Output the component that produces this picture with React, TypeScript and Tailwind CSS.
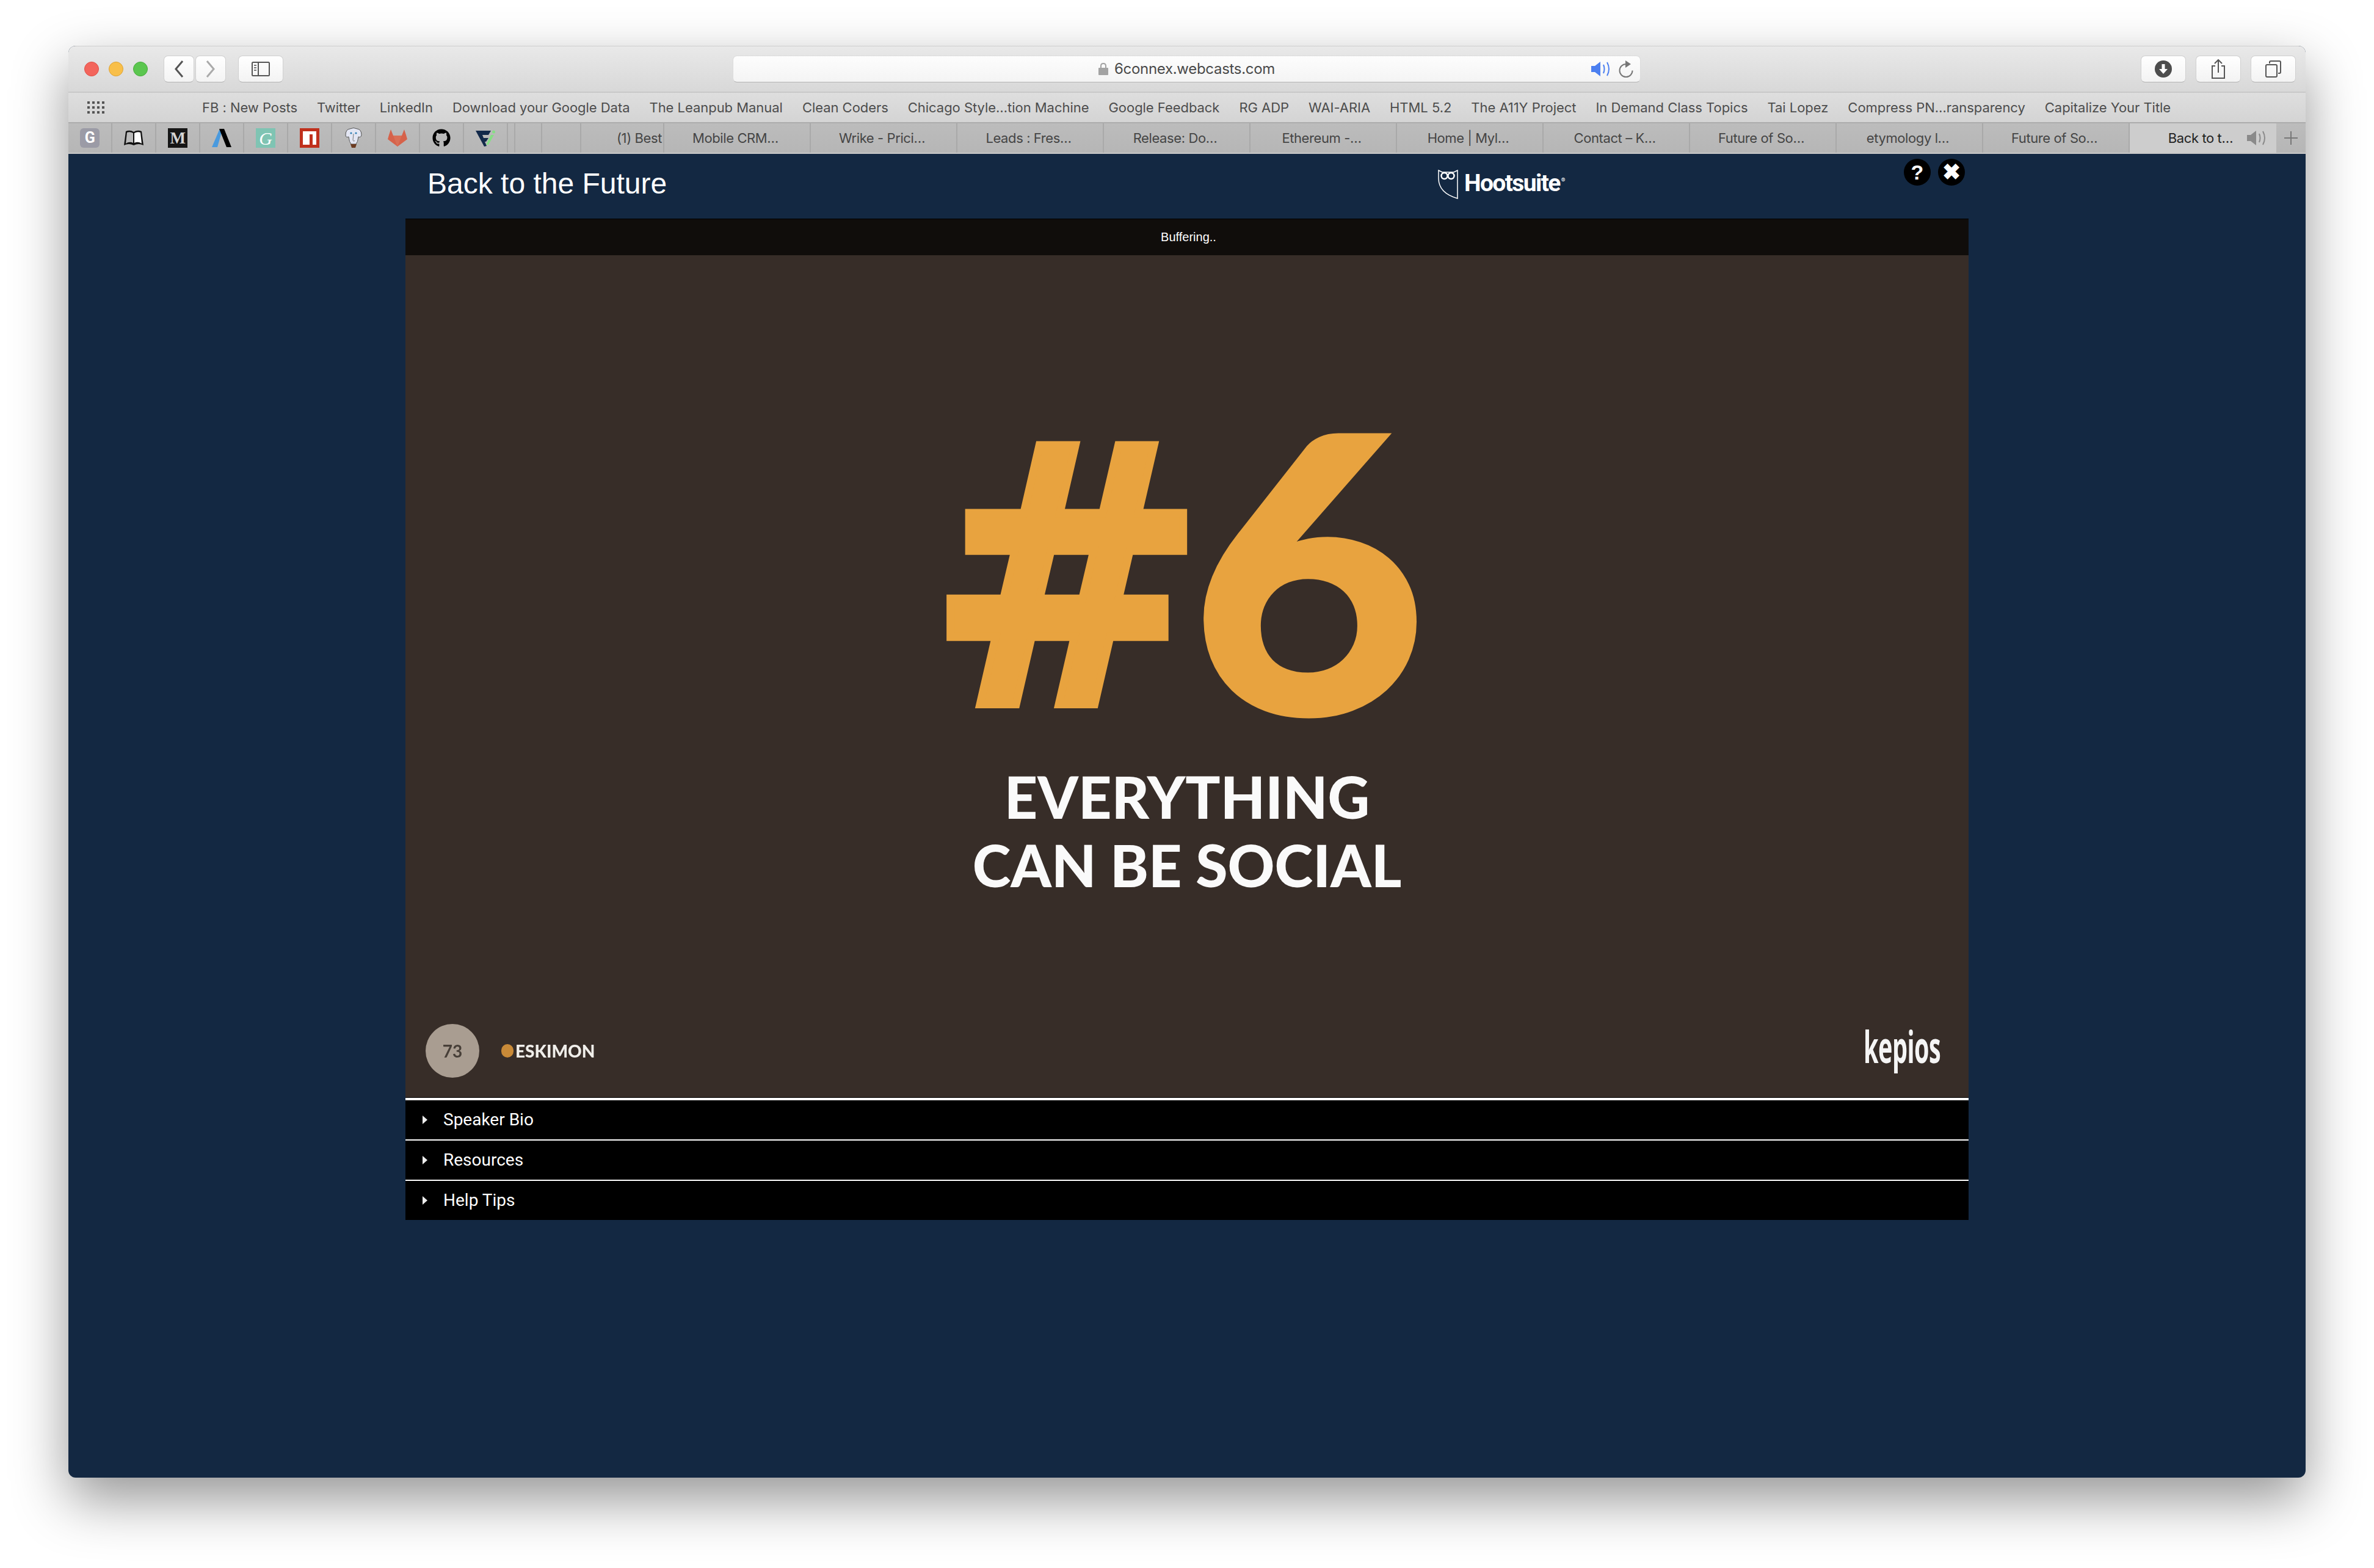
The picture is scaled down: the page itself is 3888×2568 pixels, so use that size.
import React from 'react';
import { FaGithub } from 'react-icons/fa';

const BOOKMARKS = [
  'FB : New Posts', 'Twitter', 'LinkedIn', 'Download your Google Data', 'The Leanpub Manual', 'Clean Coders',
  'Chicago Style…tion Machine', 'Google Feedback', 'RG ADP', 'WAI-ARIA', 'HTML 5.2', 'The A11Y Project',
  'In Demand Class Topics', 'Tai Lopez', 'Compress PN…ransparency', 'Capitalize Your Title',
];

const TABS = [
  'Mobile CRM…', 'Wrike - Prici…', 'Leads : Fres…', 'Release: Do…', 'Ethereum -…', 'Home | Myl…',
  'Contact – K…', 'Future of So…', 'etymology l…', 'Future of So…',
];

const ROWS = ['Speaker Bio', 'Resources', 'Help Tips'];

const ToolButton = ({ w, children }: { w: string; children: React.ReactNode }) => (
  <div className={`${w} h-[44px] flex items-center justify-center rounded-[7px] bg-gradient-to-b from-[#ffffff] to-[#f3f3f3] border border-[#d0d0d0] border-b-[#b4b4b4]`}>
    {children}
  </div>
);

// pinned tab favicons, in order
const Favicons = [
  <div key="g" className="w-[32px] h-[32px] rounded-[6px] bg-[#9b9ba6] flex items-center justify-center text-white text-[25px] font-bold font-['Roboto',sans-serif]">G</div>,
  <svg key="book" width="34" height="28" viewBox="0 0 34 28">
    <path d="M1 26 L4 3 Q11 0 17 4 Q23 0 30 3 L33 26 Q25 22 17 26 Q9 22 1 26Z" fill="#111" />
    <path d="M4 23 L6 5 Q11 3 16 6 L16 22 Q10 19 4 23Z" fill="#bbb" />
    <path d="M18 6 Q23 3 28 5 L30 23 Q24 19 18 22Z" fill="#fff" />
  </svg>,
  <div key="m" className="w-[32px] h-[32px] bg-[#161616] flex items-center justify-center text-[#d4d4d4] text-[27px] font-bold font-['Liberation_Serif',serif]">M</div>,
  <svg key="a" width="32" height="30" viewBox="0 0 32 30">
    <polygon points="0,30 12,2 17,2 9,30" fill="#4a9ade" />
    <polygon points="12,0 20,0 32,30 24,30" fill="#000" />
  </svg>,
  <div key="gr" className="w-[32px] h-[32px] bg-[#7fc4b3] flex items-center justify-center text-white text-[30px] italic font-['Liberation_Serif',serif]">G</div>,
  <div key="npm" className="w-[32px] h-[32px] bg-[#c0301c] p-[5px]">
    <div className="w-full h-full bg-white flex">
      <div className="w-[5px] h-[17px] ml-[11px] mt-[5px] bg-[#c0301c]" />
    </div>
  </div>,
  <svg key="pg" width="30" height="34" viewBox="0 0 30 34">
    <path d="M9 2 Q15 -1 21 2 Q28 3 28 12 Q27 17 23 15 Q22 24 19 27 L11 27 Q8 24 7 15 Q2 17 2 12 Q2 3 9 2Z" fill="#e3e6f3" stroke="#555" strokeWidth="1" />
    <circle cx="11" cy="9" r="1.6" fill="#2f7fb5" />
    <circle cx="19" cy="9" r="1.6" fill="#2f7fb5" />
    <path d="M15 10 L14 20 Q15 24 17 21" stroke="#777" strokeWidth="1" fill="none" />
    <path d="M10 27 H20 L18 33 H12Z" fill="#6b3b22" />
  </svg>,
  <svg key="gl" width="32" height="28" viewBox="0 0 32 28">
    <polygon points="16,28 0,16 2,9 5,0 9,10 23,10 27,0 30,9 32,16" fill="#d6624a" />
    <polygon points="16,28 9,10 23,10" fill="#d96f56" />
  </svg>,
  <FaGithub key="gh" size={30} className="text-black" />,
  <svg key="fi" width="32" height="28" viewBox="0 0 32 28">
    <polygon points="0,2 25,2 21,9 11,9 13,14 21,14 17,20 15,20 18,27 14,28" fill="#12294a" />
    <polygon points="25,9 30,9 21,25 17,25" fill="#86de85" />
    <circle cx="29.5" cy="4" r="2.5" fill="#86de85" />
  </svg>,
];

const SpeakerIcon = ({ color }: { color: string }) => (
  <svg width="32" height="24" viewBox="0 0 32 24" fill="none">
    <path d="M0 7 H6 L15 0 V24 L6 17 H0Z" fill={color} />
    <path d="M20 5 Q23 12 20 19" stroke={color} strokeWidth="2" />
    <path d="M26 1 Q32 12 26 23" stroke={color} strokeWidth="2" />
  </svg>
);

export default function App() {
  return (
    <div className="w-[3888px] h-[2568px] bg-white pt-[75px] pl-[112px] font-['Inter',sans-serif] overflow-hidden">
      <div className="w-[3664px] h-[2345px] rounded-[12px] bg-[#132842] overflow-hidden shadow-[0_36px_90px_rgba(0,0,0,0.42)] flex flex-col">
        {/* Toolbar */}
        <div className="h-[77px] flex items-center pl-[26px] pr-[16px] bg-gradient-to-b from-[#e9e9e9] to-[#d8d8d8] border-b-2 border-[#c8c8c8] border-t border-t-[#cfcfcf]">
          <div className="flex gap-[16px] w-[130px]">
            <div className="w-[24px] h-[24px] rounded-full bg-[#f3655c] border border-[#df4f47]" />
            <div className="w-[24px] h-[24px] rounded-full bg-[#f8bf4a] border border-[#dea336]" />
            <div className="w-[24px] h-[24px] rounded-full bg-[#5bc64f] border border-[#48ab3c]" />
          </div>
          <ToolButton w="w-[50px]">
            <svg width="16" height="30" viewBox="0 0 16 30" fill="none"><path d="M14 2 L3 15 L14 28" stroke="#555" strokeWidth="3" /></svg>
          </ToolButton>
          <div className="ml-[2px]">
            <ToolButton w="w-[50px]">
              <svg width="16" height="30" viewBox="0 0 16 30" fill="none"><path d="M2 2 L13 15 L2 28" stroke="#aaa" strokeWidth="3" /></svg>
            </ToolButton>
          </div>
          <div className="ml-[20px]">
            <ToolButton w="w-[74px]">
              <svg width="30" height="24" viewBox="0 0 30 24" fill="none">
                <rect x="1" y="1" width="28" height="22" rx="1.5" stroke="#555" strokeWidth="2" />
                <path d="M11 1 V23" stroke="#555" strokeWidth="2" />
                <path d="M4 6 H8 M4 10 H8 M4 14 H8" stroke="#777" strokeWidth="2" />
              </svg>
            </ToolButton>
          </div>
          {/* Address bar */}
          <div className="ml-[736px] w-[1487px] h-[44px] rounded-[7px] bg-gradient-to-b from-[#fdfdfd] to-[#f4f4f4] border border-[#dcdcdc] border-b-[#b4b4b4] flex items-center relative">
            <div className="w-full flex items-center justify-center gap-[10px]">
              <svg width="16" height="20" viewBox="0 0 16 20" fill="none">
                <path d="M4 9 V5 Q4 1 8 1 Q12 1 12 5 V9" stroke="#a3a3a3" strokeWidth="2" />
                <rect y="8" width="16" height="12" rx="1" fill="#a3a3a3" />
              </svg>
              <span className="text-[24px] text-[#4a4a4a] tracking-[-0.3px]">6connex.webcasts.com</span>
            </div>
            <div className="absolute right-[11px] top-[7px] flex items-start gap-[13px]">
              <div className="mt-[2px]"><SpeakerIcon color="#4b7ff0" /></div>
              <svg width="24" height="28" viewBox="0 0 24 28" fill="none">
                <path d="M12 6 A10.5 10.5 0 1 0 22.5 16.5" stroke="#777" strokeWidth="2" />
                <polygon points="11,0 20,6 11,12" fill="#777" />
              </svg>
            </div>
          </div>
          <div className="ml-auto flex gap-[16px]">
            <ToolButton w="w-[74px]">
              <svg width="28" height="28" viewBox="0 0 28 28">
                <circle cx="14" cy="14" r="14" fill="#4d4d4d" />
                <path d="M11.5 6 H16.5 V14 H21 L14 22 L7 14 H11.5Z" fill="#fff" />
              </svg>
            </ToolButton>
            <ToolButton w="w-[74px]">
              <svg width="24" height="32" viewBox="0 0 24 32" fill="none" stroke="#555" strokeWidth="2">
                <path d="M7 11 H2 V31 H22 V11 H17" />
                <path d="M12 22 V2 M6 7 L12 1 L18 7" />
              </svg>
            </ToolButton>
            <ToolButton w="w-[74px]">
              <svg width="26" height="28" viewBox="0 0 26 28" fill="none" stroke="#555" strokeWidth="2">
                <rect x="1" y="7" width="18" height="20" rx="2" />
                <path d="M7 5 V3 Q7 1 9 1 H23 Q25 1 25 3 V19 Q25 21 23 21 H21" />
              </svg>
            </ToolButton>
          </div>
        </div>

        {/* Bookmarks bar */}
        <div className="h-[48px] flex items-center bg-gradient-to-b from-[#dedede] to-[#d4d4d4] pl-[31px] shrink-0">
          <svg width="28" height="20" viewBox="0 0 28 20" fill="#555">
            {[0, 8, 16].map(y => [0, 8, 16, 24].map(x => <rect key={`${x}-${y}`} x={x} y={y} width="4" height="4" />))}
          </svg>
          <div className="ml-[160px] flex gap-[32px] whitespace-nowrap text-[22px] text-[#4d4d4d] tracking-[-0.04px]">
            {BOOKMARKS.map(b => <span key={b}>{b}</span>)}
          </div>
        </div>

        {/* Tab strip */}
        <div className="h-[52px] shrink-0 flex bg-gradient-to-b from-[#bcbcbc] to-[#b6b6b6] border-y-2 border-t-[#acacac] border-b-[#c8c8c8] text-[22px] text-[#454545] tracking-[-0.4px] whitespace-nowrap">
          {Favicons.map((icon, i) => (
            <div key={i} className="w-[72px] flex items-center justify-center border-r-2 border-[#a9a9a9]">{icon}</div>
          ))}
          <div className="w-[12px] border-r-2 border-[#a9a9a9]" />
          <div className="w-[44px] border-r-2 border-[#a9a9a9]" />
          <div className="w-[64px] border-r-2 border-[#a9a9a9]" />
          <div className="w-[136px] flex items-center justify-end overflow-hidden border-r-2 border-[#a9a9a9] pr-[2px]">(1) Best</div>
          {TABS.map((t, i) => (
            <div key={i} className="w-[240px] flex items-center justify-center pr-[5px] border-r-2 border-[#a9a9a9]">{t}</div>
          ))}
          <div className="w-[240px] flex items-center justify-end pr-[16px] gap-[23px] bg-[#cdcdcd] text-[#222]">
            <span>Back to t…</span>
            <SpeakerIcon color="#8a8a8a" />
          </div>
          <div className="flex-1 flex items-center justify-center pb-[1px]">
            <svg width="24" height="24" viewBox="0 0 24 24"><path d="M12 1 V23 M1 12 H23" stroke="#777" strokeWidth="2" /></svg>
          </div>
        </div>

        {/* Page */}
        <div className="ml-[552px] w-[2560px]">
          <div className="h-[106px] flex items-start">
            <div className="w-[1691px] shrink-0 pl-[36px] pt-[21px] text-[48px] leading-[56px] text-white font-['Liberation_Sans',sans-serif]">Back to the Future</div>
            <div className="w-[763px] shrink-0 flex pt-[26px]">
              <svg width="33" height="48" viewBox="0 0 33 48" fill="none">
                <path d="M1 1 L7 4 H26 L32 1 V47 Q1 38 1 14Z" stroke="#fff" strokeWidth="1.5" />
                <circle cx="10.5" cy="10" r="5" stroke="#fff" strokeWidth="2.5" />
                <circle cx="21.5" cy="10" r="5" stroke="#fff" strokeWidth="2.5" />
              </svg>
              <span className="ml-[10px] -mt-[2px] text-[39px] leading-[48px] font-bold text-white tracking-[-1.6px] font-['Roboto',sans-serif]">Hootsuite</span>
              <span className="text-[10px] text-white ml-[2px] mt-[10px]">®</span>
            </div>
            <div className="flex gap-[12px] pt-[8px] shrink-0">
              <div className="w-[44px] h-[44px] rounded-full bg-black flex items-center justify-center text-white text-[34px] font-bold font-['Liberation_Sans',sans-serif]">?</div>
              <div className="w-[44px] h-[44px] rounded-full bg-black flex items-center justify-center text-white text-[36px] font-bold font-['Liberation_Sans',sans-serif]">✖</div>
            </div>
          </div>

          {/* Player status bar */}
          <div className="h-[60px] bg-[#100d0b] border-t border-black flex items-center justify-center pl-[5px] pb-[2px] text-white text-[20px] font-['Liberation_Sans',sans-serif]">Buffering..</div>

          {/* Video frame */}
          <div className="h-[1379px] bg-[#372d28] flex flex-col items-center font-['Lato',sans-serif]">
            <div className="mt-[207px] h-[600px] pr-[62px] flex items-center gap-[0px] font-black text-[#e8a33f] leading-[600px] [-webkit-text-stroke:5px_#e8a33f]">
              <span className="mt-[48px] text-[590px] font-bold font-['DejaVu_Sans',sans-serif] scale-x-[0.92] [-webkit-text-stroke:14px_#e8a33f]">#</span>
              <span className="-ml-[34px] text-[630px] scale-x-[1.06]">6</span>
            </div>
            <div className="mt-[23px] text-[95px] leading-[112px] font-black text-[#fafafa] text-center">
              <div>EVERYTHING</div>
              <div>CAN BE SOCIAL</div>
            </div>
            <div className="mt-auto mb-[32px] w-full pl-[33px] pr-[46px] flex items-center justify-between">
              <div className="flex items-center">
                <div className="w-[88px] h-[88px] rounded-full bg-[#a99d91] flex items-center justify-center text-[#473f38] text-[28px] font-bold blur-[0.6px]">73</div>
                <div className="ml-[36px] w-[20px] h-[22px] rounded-full bg-[#c98a38] blur-[0.6px]" />
                <span className="ml-[3px] text-[28px] font-black text-[#f0eeea] blur-[0.6px]">ESKIMON</span>
              </div>
              <span className="-mt-[16px] text-[72px] leading-[72px] font-bold text-[#f5f5f5] scale-x-[0.55] origin-right tracking-[-1px] font-['Open_Sans',sans-serif]">kepios</span>
            </div>
          </div>

          {/* Accordion rows */}
          <div className="border-t border-black">
            {ROWS.map((r, i) => (
              <div key={r} className={`h-[66px] bg-black flex items-center pl-[28px] text-[28px] text-white font-['Roboto',sans-serif] ${i === 0 ? 'border-t-4 h-[68px]' : 'border-t-2'} border-white`}>
                <svg width="8" height="14" viewBox="0 0 8 14" className="mr-[26px]"><polygon points="0,0 8,7 0,14" fill="#eee" /></svg>
                {r}
              </div>
            ))}
          </div>
        </div>
      </div>
    </div>
  );
}
